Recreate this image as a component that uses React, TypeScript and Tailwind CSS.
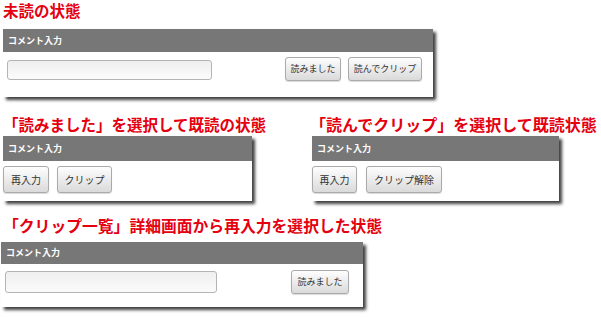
const font = { fontFamily: '"Noto Sans CJK JP", "Noto Sans", sans-serif' };

function Title({ children, className = "" }: { children: React.ReactNode; className?: string }) {
  return (
    <p className={`font-bold text-[#e4000f] whitespace-nowrap ${className}`}>
      {children}
    </p>
  );
}

function Header({ h }: { h: string }) {
  return (
    <div className={`${h} bg-[#777777] flex items-center pl-[5px] text-[9px] font-bold text-white`}>
      コメント入力
    </div>
  );
}

function Btn({ children, className = "" }: { children: React.ReactNode; className?: string }) {
  return (
    <button
      className={`flex items-center justify-center rounded-[3px] border border-[#aaaaaa] bg-gradient-to-b from-[#fefefe] to-[#dadada] text-[#333] shadow-[0_1px_1px_rgba(0,0,0,0.15)] ${className}`}
    >
      {children}
    </button>
  );
}

function Input({ className = "" }: { className?: string }) {
  return (
    <div
      className={`rounded-[3px] border border-[#b4b4b4] bg-gradient-to-b from-[#efefef] to-[#fbfbfb] ${className}`}
    />
  );
}

const panel = "bg-white shadow-[3px_3px_3px_rgba(0,0,0,0.75)]";

export default function App() {
  return (
    <div className="w-[601px] h-[317px] bg-white overflow-hidden pt-[2px]" style={font}>
      <Title className="pl-[3px] text-[15.5px] leading-[16px]">未読の状態</Title>

      <div className={`ml-[3px] mt-[11px] w-[430px] ${panel}`}>
        <Header h="h-[23px]" />
        <div className="h-[45px] flex items-start pl-[4px] pr-[11px]">
          <Input className="mt-[8px] w-[205px] h-[20px]" />
          <div className="ml-auto mt-[5px] flex gap-[7px]">
            <Btn className="w-[56px] h-[24px] text-[9px]">読みました</Btn>
            <Btn className="w-[74px] h-[24px] text-[9px]">読んでクリップ</Btn>
          </div>
        </div>
      </div>

      <div className="mt-[18px] flex">
        <div className="w-[310px]">
          <Title className="pl-[3px] text-[15.5px] leading-[18px]">「読みました」を選択して既読の状態</Title>
          <div className={`ml-[3px] mt-[3px] w-[249px] ${panel}`}>
            <Header h="h-[25px]" />
            <div className="h-[40px] flex items-start gap-[8px] pt-[5px]">
              <Btn className="w-[46px] h-[27px] text-[10px]">再入力</Btn>
              <Btn className="w-[55px] h-[27px] text-[10px]">クリップ</Btn>
            </div>
          </div>
        </div>
        <div>
          <Title className="text-[16px] leading-[18px]">「読んでクリップ」を選択して既読状態</Title>
          <div className={`ml-[2px] mt-[3px] w-[247px] ${panel}`}>
            <Header h="h-[25px]" />
            <div className="h-[40px] flex items-start gap-[9px] pt-[5px]">
              <Btn className="w-[45px] h-[27px] text-[10px]">再入力</Btn>
              <Btn className="w-[76px] h-[27px] text-[10px]">クリップ解除</Btn>
            </div>
          </div>
        </div>
      </div>

      <Title className="mt-[16px] pl-[3px] text-[15.8px] leading-[18px]">「クリップ一覧」詳細画面から再入力を選択した状態</Title>

      <div className={`ml-[1px] mt-[7px] w-[362px] ${panel}`}>
        <Header h="h-[22px]" />
        <div className="h-[43px] flex items-start pl-[4px] pr-[14px]">
          <Input className="mt-[7px] w-[212px] h-[22px]" />
          <div className="ml-auto mt-[6px]">
            <Btn className="w-[58px] h-[24px] text-[9px]">読みました</Btn>
          </div>
        </div>
      </div>
    </div>
  );
}
